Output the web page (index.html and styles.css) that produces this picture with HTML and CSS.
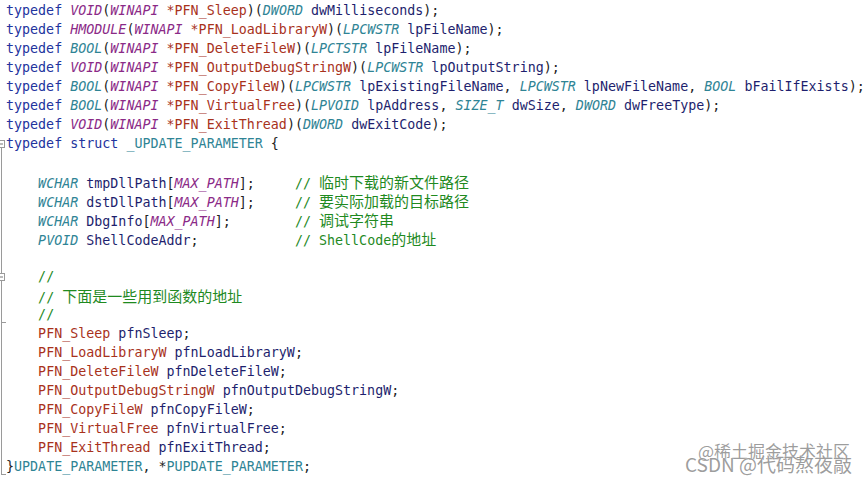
FILE: index.html
```html
<!DOCTYPE html>
<html>
<head>
<meta charset="utf-8">
<link rel="stylesheet" href="styles.css">
</head>
<body>
<div class="editor">
<div class="row"><span class="gut"></span><span class="code"><span class="k">typedef</span> <span class="m">VOID</span>(<span class="m">WINAPI</span> <span class="f">*PFN_Sleep</span>)(<span class="t">DWORD</span> <span class="v">dwMilliseconds</span>);</span></div>
<div class="row"><span class="gut"></span><span class="code"><span class="k">typedef</span> <span class="m">HMODULE</span>(<span class="m">WINAPI</span> <span class="f">*PFN_LoadLibraryW</span>)(<span class="t">LPCWSTR</span> <span class="v">lpFileName</span>);</span></div>
<div class="row"><span class="gut"></span><span class="code"><span class="k">typedef</span> <span class="t">BOOL</span>(<span class="m">WINAPI</span> <span class="f">*PFN_DeleteFileW</span>)(<span class="t">LPCTSTR</span> <span class="v">lpFileName</span>);</span></div>
<div class="row"><span class="gut"></span><span class="code"><span class="k">typedef</span> <span class="m">VOID</span>(<span class="m">WINAPI</span> <span class="f">*PFN_OutputDebugStringW</span>)(<span class="t">LPCWSTR</span> <span class="v">lpOutputString</span>);</span></div>
<div class="row"><span class="gut"></span><span class="code"><span class="k">typedef</span> <span class="t">BOOL</span>(<span class="m">WINAPI</span> <span class="f">*PFN_CopyFileW</span>)(<span class="t">LPCWSTR</span> <span class="v">lpExistingFileName</span>, <span class="t">LPCWSTR</span> <span class="v">lpNewFileName</span>, <span class="t">BOOL</span> <span class="v">bFailIfExists</span>);</span></div>
<div class="row"><span class="gut"></span><span class="code"><span class="k">typedef</span> <span class="t">BOOL</span>(<span class="m">WINAPI</span> <span class="f">*PFN_VirtualFree</span>)(<span class="t">LPVOID</span> <span class="v">lpAddress</span>, <span class="t">SIZE_T</span> <span class="v">dwSize</span>, <span class="t">DWORD</span> <span class="v">dwFreeType</span>);</span></div>
<div class="row"><span class="gut"></span><span class="code"><span class="k">typedef</span> <span class="m">VOID</span>(<span class="m">WINAPI</span> <span class="f">*PFN_ExitThread</span>)(<span class="t">DWORD</span> <span class="v">dwExitCode</span>);</span></div>
<div class="row"><span class="gut"><svg width="6" height="19" viewBox="0 0 6 19"><rect x="-2.5" y="6.5" width="7" height="7" fill="#fff" stroke="#9a9a9a"/><line x1="-1" y1="10" x2="3" y2="10" stroke="#777"/><line x1="1.5" y1="13.5" x2="1.5" y2="19" stroke="#9a9a9a"/></svg></span><span class="code"><span class="k">typedef</span> <span class="k">struct</span> <span class="u">_UPDATE_PARAMETER</span> {</span></div>
<div class="row"><span class="gut"><svg width="6" height="19" viewBox="0 0 6 19"><line x1="1.5" y1="0" x2="1.5" y2="19" stroke="#9a9a9a"/></svg></span><span class="code"> </span></div>
<div class="row"><span class="gut"><svg width="6" height="19" viewBox="0 0 6 19"><line x1="1.5" y1="0" x2="1.5" y2="19" stroke="#9a9a9a"/></svg></span><span class="code">    <span class="t">WCHAR</span> <span class="v">tmpDllPath</span>[<span class="m">MAX_PATH</span>];     <span class="c">// <span class="cjk">临时下载的新文件路径</span></span></span></div>
<div class="row"><span class="gut"><svg width="6" height="19" viewBox="0 0 6 19"><line x1="1.5" y1="0" x2="1.5" y2="19" stroke="#9a9a9a"/></svg></span><span class="code">    <span class="t">WCHAR</span> <span class="v">dstDllPath</span>[<span class="m">MAX_PATH</span>];     <span class="c">// <span class="cjk">要实际加载的目标路径</span></span></span></div>
<div class="row"><span class="gut"><svg width="6" height="19" viewBox="0 0 6 19"><line x1="1.5" y1="0" x2="1.5" y2="19" stroke="#9a9a9a"/></svg></span><span class="code">    <span class="t">WCHAR</span> <span class="v">DbgInfo</span>[<span class="m">MAX_PATH</span>];        <span class="c">// <span class="cjk">调试字符串</span></span></span></div>
<div class="row"><span class="gut"><svg width="6" height="19" viewBox="0 0 6 19"><line x1="1.5" y1="0" x2="1.5" y2="19" stroke="#9a9a9a"/></svg></span><span class="code">    <span class="t">PVOID</span> <span class="v">ShellCodeAddr</span>;            <span class="c">// ShellCode<span class="cjk">的地址</span></span></span></div>
<div class="row"><span class="gut"><svg width="6" height="19" viewBox="0 0 6 19"><line x1="1.5" y1="0" x2="1.5" y2="19" stroke="#9a9a9a"/></svg></span><span class="code"> </span></div>
<div class="row"><span class="gut"><svg width="6" height="19" viewBox="0 0 6 19"><line x1="1.5" y1="0" x2="1.5" y2="19" stroke="#9a9a9a"/><rect x="-2.5" y="6.5" width="7" height="7" fill="#fff" stroke="#9a9a9a"/><line x1="-1" y1="10" x2="3" y2="10" stroke="#777"/></svg></span><span class="code">    <span class="c">//</span></span></div>
<div class="row"><span class="gut"><svg width="6" height="19" viewBox="0 0 6 19"><line x1="1.5" y1="0" x2="1.5" y2="19" stroke="#9a9a9a"/></svg></span><span class="code">    <span class="c">// <span class="cjk">下面是一些用到函数的地址</span></span></span></div>
<div class="row"><span class="gut"><svg width="6" height="19" viewBox="0 0 6 19"><line x1="1.5" y1="0" x2="1.5" y2="19" stroke="#9a9a9a"/><line x1="1.5" y1="17.5" x2="6" y2="17.5" stroke="#9a9a9a"/></svg></span><span class="code">    <span class="c">//</span></span></div>
<div class="row"><span class="gut"><svg width="6" height="19" viewBox="0 0 6 19"><line x1="1.5" y1="0" x2="1.5" y2="19" stroke="#9a9a9a"/></svg></span><span class="code">    <span class="f">PFN_Sleep</span> <span class="v">pfnSleep</span>;</span></div>
<div class="row"><span class="gut"><svg width="6" height="19" viewBox="0 0 6 19"><line x1="1.5" y1="0" x2="1.5" y2="19" stroke="#9a9a9a"/></svg></span><span class="code">    <span class="f">PFN_LoadLibraryW</span> <span class="v">pfnLoadLibraryW</span>;</span></div>
<div class="row"><span class="gut"><svg width="6" height="19" viewBox="0 0 6 19"><line x1="1.5" y1="0" x2="1.5" y2="19" stroke="#9a9a9a"/></svg></span><span class="code">    <span class="f">PFN_DeleteFileW</span> <span class="v">pfnDeleteFileW</span>;</span></div>
<div class="row"><span class="gut"><svg width="6" height="19" viewBox="0 0 6 19"><line x1="1.5" y1="0" x2="1.5" y2="19" stroke="#9a9a9a"/></svg></span><span class="code">    <span class="f">PFN_OutputDebugStringW</span> <span class="v">pfnOutputDebugStringW</span>;</span></div>
<div class="row"><span class="gut"><svg width="6" height="19" viewBox="0 0 6 19"><line x1="1.5" y1="0" x2="1.5" y2="19" stroke="#9a9a9a"/></svg></span><span class="code">    <span class="f">PFN_CopyFileW</span> <span class="v">pfnCopyFileW</span>;</span></div>
<div class="row"><span class="gut"><svg width="6" height="19" viewBox="0 0 6 19"><line x1="1.5" y1="0" x2="1.5" y2="19" stroke="#9a9a9a"/></svg></span><span class="code">    <span class="f">PFN_VirtualFree</span> <span class="v">pfnVirtualFree</span>;</span></div>
<div class="row"><span class="gut"><svg width="6" height="19" viewBox="0 0 6 19"><line x1="1.5" y1="0" x2="1.5" y2="19" stroke="#9a9a9a"/></svg></span><span class="code">    <span class="f">PFN_ExitThread</span> <span class="v">pfnExitThread</span>;</span></div>
<div class="row"><span class="gut"><svg width="6" height="19" viewBox="0 0 6 19"><line x1="1.5" y1="0" x2="1.5" y2="18" stroke="#9a9a9a"/><line x1="1.5" y1="17.5" x2="6" y2="17.5" stroke="#9a9a9a"/></svg></span><span class="code">}<span class="u">UPDATE_PARAMETER</span>, *<span class="u">PUPDATE_PARAMETER</span>;</span></div>
</div>
<div class="watermark">
<div class="wm1">@稀土掘金技术社区</div>
<div class="wm2">CSDN @代码熬夜敲</div>
</div>
</body>
</html>
```
FILE: styles.css
```css
html, body {
  margin: 0;
  padding: 0;
  background: #ffffff;
}
body {
  width: 866px;
  height: 480px;
  overflow: hidden;
  position: relative;
}
.editor {
  display: flex;
  flex-direction: column;
  padding-top: 1px;
}
.row {
  display: flex;
  height: 19px;
  align-items: stretch;
}
.gut {
  width: 6px;
  flex: 0 0 6px;
  display: block;
  overflow: hidden;
}
.gut svg {
  display: block;
}
.code {
  white-space: pre;
  font-family: "DejaVu Sans Mono", monospace;
  font-size: 13.33px;
  line-height: 19px;
  color: #222222;
}
.k { color: #22349e; }
.m { color: #8b2a87; font-style: italic; }
.t { color: #2f8495; font-style: italic; }
.u { color: #2f8495; }
.f { color: #a8321c; }
.v { color: #1e1f6e; }
.c { color: #1f8a1f; }
.cjk {
  font-family: "Noto Sans CJK SC", sans-serif;
  font-size: 15px;
  line-height: 19px;
}
.watermark {
  position: absolute;
  right: 14px;
  bottom: 7px;
  display: flex;
  flex-direction: column;
  align-items: flex-end;
  font-family: "Noto Sans CJK SC", sans-serif;
  color: rgba(140, 140, 140, 0.85);
  text-shadow: 0 0 1px #ffffff;
  line-height: 1;
}
.wm1 {
  font-size: 17px;
  margin-right: 2px;
  margin-bottom: -5px;
}
.wm2 {
  font-size: 19px;
}
```
